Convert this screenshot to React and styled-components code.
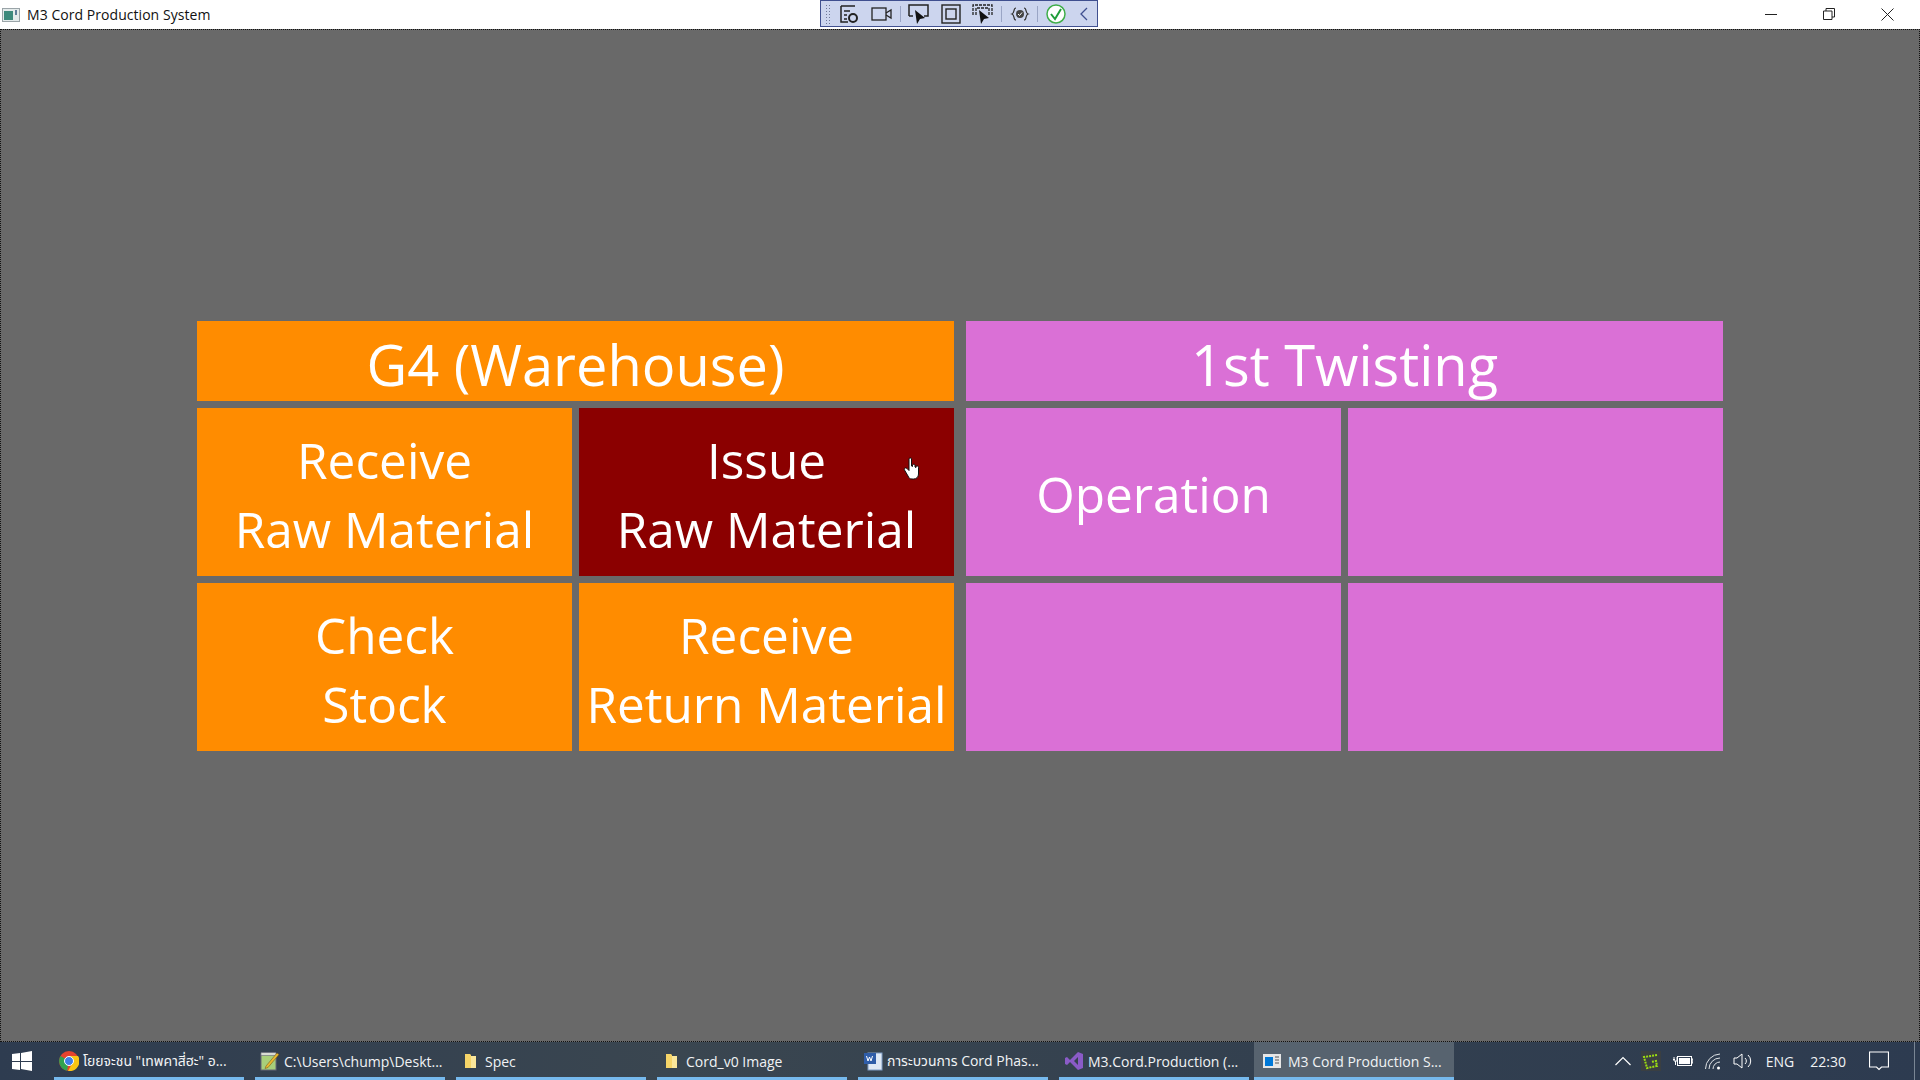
import React from 'react';
import styled, { createGlobalStyle } from 'styled-components';

const ui = '"Open Sans", "Noto Sans", "Noto Sans Thai", sans-serif';

const GlobalStyle = createGlobalStyle`
  html, body {
    margin: 0;
    padding: 0;
    width: 1920px;
    height: 1080px;
    overflow: hidden;
    background: #696969;
  }
`;

const Screen = styled.div`
  width: 1920px;
  height: 1080px;
  display: flex;
  flex-direction: column;
  font-family: ${ui};
`;

const TitleBar = styled.div`
  height: 29px;
  flex: none;
  background: #fff;
  display: flex;
  align-items: center;
  position: relative;
`;

const AppIcon = styled.svg`
  width: 18px;
  height: 14px;
  margin-left: 2px;
`;

const TitleText = styled.div`
  margin-left: 7px;
  font-size: 14px;
  letter-spacing: 0.05px;
  color: #111;
`;

const DebugBar = styled.div`
  position: absolute;
  left: 820px;
  top: 0;
  width: 278px;
  height: 27px;
  box-sizing: border-box;
  padding-top: 1px;
  background: #ccd5ee;
  border: 1px solid #3f4f8f;
  display: flex;
  align-items: center;
`;

const Grip = styled.div`
  width: 6px;
  height: 20px;
  flex: none;
  margin: 0 7px 0 4px;
  background-image: radial-gradient(#6f7897 0.8px, transparent 1px);
  background-size: 3px 3px;
`;

const ToolIcon = styled.svg`
  width: 22px;
  height: 22px;
  flex: none;
  margin-right: ${(p) => p.$gap}px;
`;

const ToolSep = styled.div`
  width: 1px;
  height: 16px;
  background: #9aa5c5;
  margin-right: ${(p) => p.$gap || 7}px;
  flex: none;
`;

const WindowButtons = styled.div`
  position: absolute;
  right: 4px;
  top: 0;
  display: flex;
`;

const WinButton = styled.div`
  width: 58px;
  height: 28px;
  display: flex;
  align-items: center;
  justify-content: center;
`;

const Desktop = styled.div`
  flex: 1;
  box-sizing: border-box;
  border: 1px dotted #111;
  background: #696969;
  display: flex;
  flex-direction: column;
  align-items: center;
  padding-top: 291px;
`;

const Board = styled.div`
  display: flex;
  gap: 12px;
`;

const Section = styled.div`
  width: 757px;
  display: grid;
  grid-template-columns: 375px 375px;
  grid-template-rows: 80px 168px 168px;
  gap: 7px;
`;

const Tile = styled.div`
  background: ${(p) => p.$bg};
  color: #fff;
  grid-column: ${(p) => (p.$wide ? '1 / 3' : 'auto')};
  display: flex;
  align-items: center;
  justify-content: center;
  text-align: center;
  box-sizing: border-box;
  padding-top: ${(p) => (p.$wide ? 5 : 5)}px;
  font-size: ${(p) => (p.$wide ? 56 : 49.5)}px;
  line-height: ${(p) => (p.$wide ? 74 : 69)}px;
  font-weight: 400;
  position: relative;
`;

const Cursor = styled.svg`
  position: absolute;
  left: 324px;
  top: 49px;
  width: 18px;
  height: 23px;
`;

const Taskbar = styled.div`
  height: 38px;
  flex: none;
  background: linear-gradient(90deg, #2e3c50 0%, #3a4650 35%, #34414f 60%, #2d3b50 100%);
  display: flex;
  align-items: stretch;
  color: #f1f3f5;
  font-size: 14px;
`;

const StartBtn = styled.div`
  width: 54px;
  box-sizing: border-box;
  padding-left: 12px;
  display: flex;
  align-items: center;
  flex: none;
`;

const TaskList = styled.div`
  display: flex;
  gap: 11px;
`;

const TaskItem = styled.div`
  width: ${(p) => (p.$active ? 200 : 190)}px;
  margin-left: ${(p) => (p.$active ? -6 : 0)}px;
  box-sizing: border-box;
  display: flex;
  align-items: center;
  gap: ${(p) => (p.$active ? 6 : 4)}px;
  padding: 3px 0 0 ${(p) => (p.$active ? 8 : 5)}px;
  border-bottom: 3px solid #76b9ed;
  background: ${(p) => (p.$active ? '#57636f' : 'transparent')};
  white-space: nowrap;
  overflow: hidden;
`;

const TaskIcon = styled.svg`
  width: 20px;
  height: 20px;
  flex: none;
`;

const Tray = styled.div`
  margin-left: auto;
  display: flex;
  align-items: center;
`;

const TrayIcon = styled.svg`
  height: 20px;
  width: ${(p) => p.$w || 20}px;
  margin-right: ${(p) => p.$gap}px;
  flex: none;
`;

const TrayText = styled.div`
  margin-right: ${(p) => p.$gap}px;
  font-size: 14px;
`;

const ShowDesktop = styled.div`
  width: 1px;
  align-self: stretch;
  margin: 0 5px 0 25px;
  background: #7a8694;
`;

const orange = '#ff8c00';
const maroon = '#8b0000';
const orchid = '#da70d6';

const Two = ({ a, b }) => (
  <div>
    {a}
    <br />
    {b}
  </div>
);

const FolderIcon = () => (
  <TaskIcon viewBox="0 0 20 20">
    <path d="M4 3h5l1 1v13H4z" fill="#f6d568" />
    <path d="M10 5h5v12h-5z" fill="#fbe79a" />
  </TaskIcon>
);

export default function App() {
  return (
    <Screen>
      <GlobalStyle />
      <TitleBar>
        <AppIcon viewBox="0 0 18 14">
          <rect x="0.500" y="0.500" width="17" height="13" fill="#e4ebeb" stroke="#9aa4a8" />
          <rect x="2" y="3" width="9" height="9" fill="#3d8a7c" />
          <rect x="13" y="2" width="2" height="5" fill="#5f7f99" />
        </AppIcon>
        <TitleText>M3 Cord Production System</TitleText>
        <DebugBar>
          <Grip />
          <ToolIcon viewBox="0 0 22 22" $gap={11}>
            <path d="M3 3h14M3 3v16h7M6 8h6M6 12h3M6 16h3" fill="none" stroke="#222" strokeWidth="1.500" />
            <circle cx="15" cy="15" r="4" fill="none" stroke="#222" strokeWidth="2" />
          </ToolIcon>
          <ToolIcon viewBox="0 0 22 22" $gap={7}>
            <rect x="1" y="5" width="14" height="12" fill="none" stroke="#222" strokeWidth="1.300" />
            <path d="M15 10l5-3v8l-5-3" fill="none" stroke="#222" strokeWidth="1.300" />
          </ToolIcon>
          <ToolSep />
          <ToolIcon viewBox="0 0 22 22" $gap={10}>
            <path d="M1 13V2h19v11h-4M1 13h4" fill="none" stroke="#222" strokeWidth="1.500" />
            <path d="M7 7l10 8-5 1-3 5z" fill="#111" />
          </ToolIcon>
          <ToolIcon viewBox="0 0 22 22" $gap={10}>
            <rect x="2" y="2" width="18" height="18" fill="none" stroke="#222" strokeWidth="1.400" />
            <rect x="6" y="6" width="10" height="10" fill="none" stroke="#222" strokeWidth="1.400" />
          </ToolIcon>
          <ToolIcon viewBox="0 0 22 22" $gap={7}>
            <path d="M1 12V2h19v10M4 12V5h13v7" fill="none" stroke="#222" strokeWidth="1.300" strokeDasharray="3 1" />
            <path d="M7 7l10 8-5 1-3 5z" fill="#111" />
          </ToolIcon>
          <ToolSep />
          <ToolIcon viewBox="0 0 22 22" $gap={6}>
            <path d="M7 5c-3 0-1 5-4 6 3 1 1 6 4 6M15 5c3 0 1 5 4 6-3 1-1 6-4 6" fill="none" stroke="#333" strokeWidth="1.200" />
            <circle cx="11" cy="11" r="4" fill="#444" />
            <path d="M9 11l1.500 1.500L13 9.500" stroke="#fff" fill="none" />
          </ToolIcon>
          <ToolSep />
          <ToolIcon viewBox="0 0 22 22" $gap={7}>
            <circle cx="11" cy="11" r="9" fill="#fff" stroke="#3fae49" strokeWidth="1.500" />
            <path d="M6 11l4 5 6-10" fill="none" stroke="#1f9d3a" strokeWidth="2" />
          </ToolIcon>
          <ToolIcon viewBox="0 0 22 22" $gap={0}>
            <path d="M13 5l-6 6 6 6" fill="none" stroke="#3f4f8f" strokeWidth="1.300" />
          </ToolIcon>
        </DebugBar>
        <WindowButtons>
          <WinButton>
            <svg width="12" height="12" viewBox="0 0 12 12"><path d="M0 6.500h12" stroke="#222" /></svg>
          </WinButton>
          <WinButton>
            <svg width="12" height="12" viewBox="0 0 12 12">
              <path d="M0.500 3h8.500v8.500H0.500zM3 3V0.500h8.500V9H9" fill="none" stroke="#222" />
            </svg>
          </WinButton>
          <WinButton>
            <svg width="13" height="13" viewBox="0 0 13 13"><path d="M0.500 0.500l12 12M12.500 0.500l-12 12" stroke="#222" /></svg>
          </WinButton>
        </WindowButtons>
      </TitleBar>

      <Desktop>
        <Board>
          <Section>
            <Tile $bg={orange} $wide>G4 (Warehouse)</Tile>
            <Tile $bg={orange}><Two a="Receive" b="Raw Material" /></Tile>
            <Tile $bg={maroon}>
              <Two a="Issue" b="Raw Material" />
              <Cursor viewBox="0 0 18 23">
                <path d="M6 2c0-1.500 2.500-1.500 2.500 0v7l1 .5V8c1-1 2-1 2.500 0v2l1 .5V9.500c1-1 2.500-.5 2.500 1V17c0 3-2 5-5 5H9c-2.500 0-3-1-4-3L1.500 13c-1-1.500 1-3 2.500-1.500l2 2z" fill="#fff" stroke="#111" strokeWidth="1" />
              </Cursor>
            </Tile>
            <Tile $bg={orange}><Two a="Check" b="Stock" /></Tile>
            <Tile $bg={orange}><Two a="Receive" b="Return Material" /></Tile>
          </Section>
          <Section>
            <Tile $bg={orchid} $wide>1st Twisting</Tile>
            <Tile $bg={orchid}>Operation</Tile>
            <Tile $bg={orchid} />
            <Tile $bg={orchid} />
            <Tile $bg={orchid} />
          </Section>
        </Board>
      </Desktop>

      <Taskbar>
        <StartBtn>
          <svg width="20" height="20" viewBox="0 0 20 20">
            <path d="M0 3l8-1v8H0zM9 2l11-2v10H9zM0 11h8v8l-8-1zM9 11h11v9L9 18z" fill="#fff" />
          </svg>
        </StartBtn>
        <TaskList>
          <TaskItem>
            <TaskIcon viewBox="0 0 20 20">
              <circle cx="10" cy="10" r="10" fill="#e5432e" />
              <path d="M10 10L1.500 5A10 10 0 0 0 8 19.800z" fill="#32a24f" />
              <path d="M10 5h9a10 10 0 0 1-10 15l5-9z" fill="#f9c513" />
              <circle cx="10" cy="10" r="4.500" fill="#3f7fe6" stroke="#fff" />
            </TaskIcon>
            <span>โยยจะชน "เทพคาสี่ฮะ" อ...</span>
          </TaskItem>
          <TaskItem>
            <TaskIcon viewBox="0 0 20 20">
              <rect x="1" y="3" width="15" height="16" fill="#a8cf7a" stroke="#667" />
              <path d="M1 1.500h15v3H1z" fill="#d9dcd4" stroke="#667" strokeWidth="0.600" />
              <path d="M6 15L17 2l2 1.500L8 16.500l-3 1z" fill="#e8b830" stroke="#6b4a10" strokeWidth="0.500" />
            </TaskIcon>
            <span>C:\Users\chump\Deskt...</span>
          </TaskItem>
          <TaskItem>
            <FolderIcon />
            <span>Spec</span>
          </TaskItem>
          <TaskItem>
            <FolderIcon />
            <span>Cord_v0 Image</span>
          </TaskItem>
          <TaskItem>
            <TaskIcon viewBox="0 0 20 20">
              <rect x="5" y="2" width="14" height="17" fill="#dfe9f5" stroke="#7e9cc4" />
              <rect x="1" y="2" width="12" height="11" fill="#2f5da8" />
              <path d="M3.500 5l1.500 5 1.500-4 1.500 4 1.500-5" fill="none" stroke="#fff" />
            </TaskIcon>
            <span>การะบวนการ Cord Phas...</span>
          </TaskItem>
          <TaskItem>
            <TaskIcon viewBox="0 0 20 20">
              <path d="M14 1l5 2v14l-5 2L6 11l-3 3-2-1V7l2-1 3 3zM14 6l-4 4 4 4z" fill="#8a5bc7" />
            </TaskIcon>
            <span>M3.Cord.Production (...</span>
          </TaskItem>
          <TaskItem $active>
            <TaskIcon viewBox="0 0 20 20">
              <rect x="1" y="3" width="18" height="14" fill="#e6e6e6" />
              <rect x="3" y="6" width="8" height="9" fill="#0078d7" />
              <path d="M13 6h4M13 9h4M13 12h4" stroke="#555" />
            </TaskIcon>
            <span>M3 Cord Production S...</span>
          </TaskItem>
        </TaskList>
        <Tray>
          <TrayIcon viewBox="0 0 16 20" $w={16} $gap={10}>
            <path d="M0.500 14L8 6.500l7.500 7.500" fill="none" stroke="#fff" strokeWidth="1.200" />
          </TrayIcon>
          <TrayIcon viewBox="0 0 20 20" $gap={12}>
            <rect width="20" height="20" fill="#3a3f42" />
            <path d="M16 4L3 6l3 11 10-2-1-5-5 1" fill="none" stroke="#9bdc12" strokeWidth="2" strokeDasharray="2 1" />
          </TrayIcon>
          <TrayIcon viewBox="0 0 20 20" $gap={12}>
            <rect x="4.500" y="5.500" width="14" height="9" fill="#2e3c50" stroke="#fff" />
            <rect x="6" y="7" width="11" height="6" fill="#fff" />
            <path d="M19 8h1v4h-1zM0 8.500h2M1 6v4h3V6M2.500 10v4" fill="none" stroke="#fff" />
          </TrayIcon>
          <TrayIcon viewBox="0 0 16 20" $w={16} $gap={12}>
            <path d="M0.500 18A15 15 0 0 1 15 3M4 18A11 11 0 0 1 15 7M8 18a7 7 0 0 1 7-7" fill="none" stroke="#dfe3e6" strokeWidth="1" />
            <circle cx="13.500" cy="17" r="1.500" fill="#fff" />
          </TrayIcon>
          <TrayIcon viewBox="0 0 20 20" $gap={13}>
            <path d="M1 7h3l5-4v14l-5-4H1zM12 7a4 4 0 0 1 0 6M15 4a8 8 0 0 1 0 12" fill="none" stroke="#fff" strokeWidth="1" />
          </TrayIcon>
          <TrayText $gap={16}>ENG</TrayText>
          <TrayText $gap={23}>22:30</TrayText>
          <TrayIcon viewBox="0 0 20 20" $gap={0}>
            <path d="M0.500 1h19v15h-7l-2.500 2.500L7.500 16h-7z" fill="none" stroke="#fff" strokeWidth="1.200" />
          </TrayIcon>
          <ShowDesktop />
        </Tray>
      </Taskbar>
    </Screen>
  );
}
